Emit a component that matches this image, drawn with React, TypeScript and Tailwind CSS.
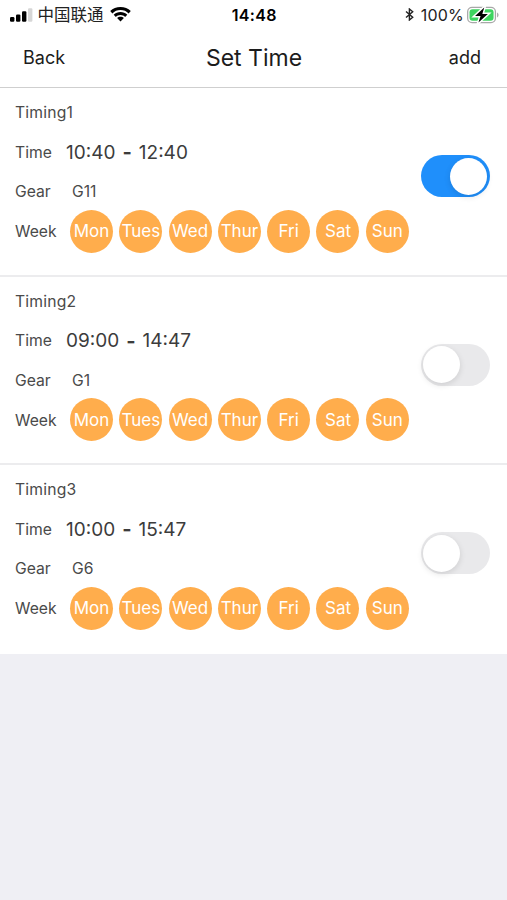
import React, {useState} from 'react';


type Timing = {
    name: string;
    from: string;
    to: string;
    gear: string;
    enabled: boolean;
};

const DAYS = ['Mon', 'Tues', 'Wed', 'Thur', 'Fri', 'Sat', 'Sun'];

const TIMINGS: Timing[] = [
    {name: 'Timing1', from: '10:40', to: '12:40', gear: 'G11', enabled: true},
    {name: 'Timing2', from: '09:00', to: '14:47', gear: 'G1', enabled: false},
    {name: 'Timing3', from: '10:00', to: '15:47', gear: 'G6', enabled: false},
];


const StatusBar = () => (
    <div className="grid h-[30px] grid-cols-[1fr_auto_1fr] items-center pb-px pl-[9.5px] pr-[8px] text-black">
        <div className="flex items-center">
            <svg width="23" height="14" viewBox="0 0 23 14">
                <rect x="0" y="9" width="4.4" height="4.8" rx="1.2"/>
                <rect x="6" y="6.4" width="4.4" height="7.4" rx="1.2"/>
                <rect x="12" y="3.2" width="4.4" height="10.6" rx="1.2"/>
                <rect x="18" y="0.2" width="4.4" height="13.6" rx="1.2" fill="#d6d6d6"/>
            </svg>
            <span className="ml-[5px] font-['Noto_Sans_CJK_SC',sans-serif] text-[16.5px] leading-none text-[#222]">中国联通</span>
            <svg className="ml-[6px]" width="21" height="15" viewBox="0 0 21 15">
                <path d="M10.5 0C6.5 0 2.9 1.5 .2 4.1L2.4 6.4C4.5 4.3 7.3 3.1 10.5 3.1S16.5 4.3 18.6 6.4L20.8 4.1C18.1 1.5 14.5 0 10.5 0Z"/>
                <path d="M10.5 4.9C7.9 4.9 5.5 5.9 3.7 7.7L5.9 9.9C7.1 8.7 8.7 8 10.5 8S13.9 8.7 15.1 9.9L17.3 7.7C15.5 5.9 13.1 4.9 10.5 4.9Z"/>
                <path d="M10.5 9.7C9.2 9.7 8 10.2 7.1 11.1L10.5 14.5L13.9 11.1C13 10.2 11.8 9.7 10.5 9.7Z"/>
            </svg>
        </div>
        <div className="pt-px text-[16px] font-semibold leading-none tracking-[0.3px]">14:48</div>
        <div className="flex items-center justify-end">
            <svg width="9" height="13" viewBox="0 0 9 13" fill="none" stroke="#222" strokeWidth="1.4">
                <path d="M1 3.5L7.7 9.3L4.4 12V1L7.7 3.7L1 9.5"/>
            </svg>
            <span className="ml-[7px] pt-px text-[16px] leading-none tracking-[0.2px] text-[#222]">100%</span>
            <svg className="ml-[3px]" width="32" height="18" viewBox="0 0 33 18">
                <rect x=".7" y="1.2" width="28.6" height="15.6" rx="4.5" fill="#fff" stroke="#a8a8a8" strokeWidth="1.3"/>
                <rect x="2.6" y="3.1" width="24.8" height="11.8" rx="3" fill="#3dd45f"/>
                <path d="M31 6.5V11.5C32 11.1 32.5 10.2 32.5 9S32 6.9 31 6.5Z" fill="#a8a8a8"/>
                <path d="M17.8 1.2L8.3 10H14L11.8 16.8L21.5 8H15.8Z" fill="#000" stroke="#fff" strokeWidth="3" paintOrder="stroke"/>
            </svg>
        </div>
    </div>
);


const NavBar = () => (
    <div className="grid h-[58px] grid-cols-[1fr_auto_1fr] items-center border-b border-[#cfcfcf] pl-[23px] pr-[26px] text-[#1c1c1c]">
        <button className="pb-[2px] text-left text-[18px]">Back</button>
        <h1 className="pl-[4px] text-[23px] leading-none">Set Time</h1>
        <button className="pb-[2px] text-right text-[18px]">add</button>
    </div>
);


const Toggle = ({checked, onChange}: {checked: boolean; onChange: () => void}) => (
    <button
        role="switch"
        aria-checked={checked}
        onClick={onChange}
        className={`flex h-[42px] w-[69px] items-center rounded-full p-[2.5px] ${checked ? 'justify-end bg-[#1f8ffb]' : 'justify-start bg-[#e9e9eb]'}`}
    >
        <span className="size-[37px] rounded-full bg-white shadow-[0_2px_6px_rgba(0,0,0,0.12)]"/>
    </button>
);


const TimingCard = ({name, from, to, gear, enabled}: Timing) => {
    const [checked, setChecked] = useState(enabled);

    return (
        <div className="flex h-[188.5px] justify-between border-b-2 border-[#ececee] bg-white pl-[15px] pr-[17.5px] pt-[4.5px] text-[15.7px] text-[#4a4a4a] last:border-b-0">
            <div className="flex flex-col">
                <div className="flex h-[39.7px] items-center pt-px tracking-[0.2px]">{name}</div>
                <div className="flex h-[39.7px] items-center">
                    <span className="w-[51px] pt-px">Time</span>
                    <span className="flex items-center pt-[2px] text-[19px] text-[#3c3c3c]">
                        {from}
                        <span className="mx-[7px] pb-[2px] text-[20px] font-bold">-</span>
                        {to}
                    </span>
                </div>
                <div className="flex h-[39.7px] items-center pt-px">
                    <span className="w-[57px]">Gear</span>
                    <span>{gear}</span>
                </div>
                <div className="flex h-[39.7px] items-center">
                    <span className="w-[55px] pt-px">Week</span>
                    <div className="flex gap-[6.3px]">
                        {DAYS.map((day) => (
                            <div key={day} className="flex size-[43px] items-center justify-center rounded-full bg-[#ffad4c] pt-px text-[17px] text-white">
                                {day}
                            </div>
                        ))}
                    </div>
                </div>
            </div>
            <div className="pt-[62.7px]">
                <Toggle checked={checked} onChange={() => setChecked(!checked)}/>
            </div>
        </div>
    );
};


const App = () => (
    <div className="min-h-screen bg-[#efeff4] font-['Inter',sans-serif]">
        <div className="bg-white">
            <StatusBar/>
            <NavBar/>
        </div>
        <div className="flex flex-col">
            {TIMINGS.map((timing) => (
                <TimingCard key={timing.name} {...timing}/>
            ))}
        </div>
    </div>
);

export default App;
